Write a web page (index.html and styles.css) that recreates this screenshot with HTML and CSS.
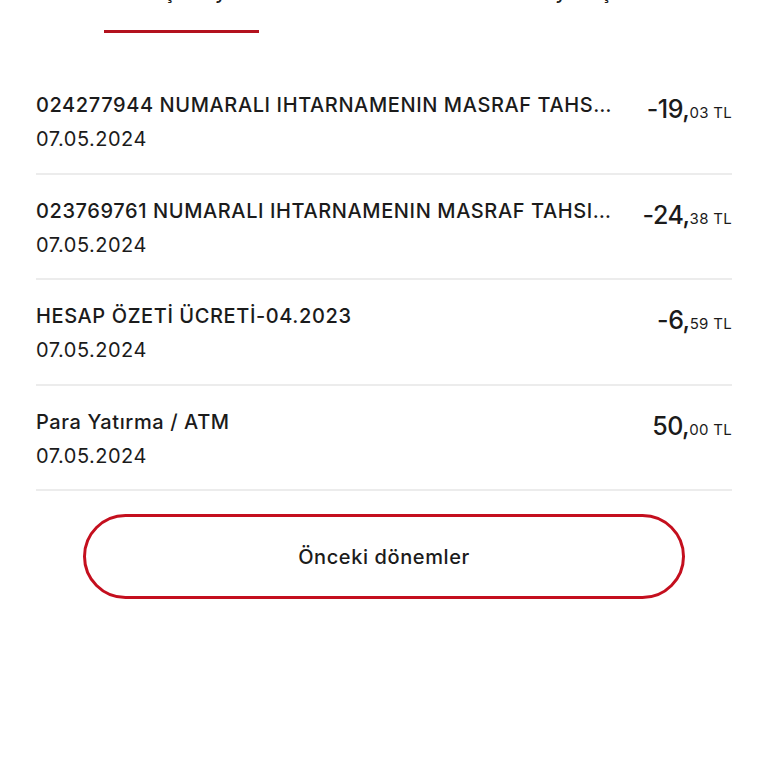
FILE: index.html
```html
<!DOCTYPE html>
<html lang="tr">
<head>
<meta charset="utf-8">
<link rel="stylesheet" href="styles.css">
</head>
<body>
<div class="page">
  <div class="tabs">
    <div class="tab tab-active">
      <span class="tab-label">Geçen ay</span>
      <span class="tab-bar"></span>
    </div>
    <div class="tab">
      <span class="tab-label">Bekleyen işlemler</span>
      <span class="tab-bar tab-bar-off"></span>
    </div>
  </div>

  <ul class="list">
    <li class="row">
      <div class="info">
        <div class="title">024277944 NUMARALI IHTARNAMENIN MASRAF TAHSILATI</div>
        <div class="date">07.05.2024</div>
      </div>
      <div class="amount"><span class="int">-19,</span><span class="dec">03 TL</span></div>
    </li>
    <li class="row">
      <div class="info">
        <div class="title">023769761 NUMARALI IHTARNAMENIN MASRAF TAHSILATI</div>
        <div class="date">07.05.2024</div>
      </div>
      <div class="amount"><span class="int">-24,</span><span class="dec">38 TL</span></div>
    </li>
    <li class="row">
      <div class="info">
        <div class="title">HESAP ÖZETİ ÜCRETİ-04.2023</div>
        <div class="date">07.05.2024</div>
      </div>
      <div class="amount"><span class="int">-6,</span><span class="dec">59 TL</span></div>
    </li>
    <li class="row">
      <div class="info">
        <div class="title">Para Yatırma / ATM</div>
        <div class="date">07.05.2024</div>
      </div>
      <div class="amount"><span class="int">50,</span><span class="dec">00 TL</span></div>
    </li>
  </ul>

  <div class="actions">
    <button class="btn-outline" type="button">Önceki dönemler</button>
  </div>
</div>
</body>
</html>
```

FILE: styles.css
```css
* { box-sizing: border-box; }

html, body {
  margin: 0;
  padding: 0;
  background: #ffffff;
}

body {
  font-family: "Inter", "Lato", "Noto Sans", sans-serif;
  color: #1b1b1b;
  overflow: hidden;
}

.page {
  padding: 0 36px;
}

.tabs {
  display: flex;
  justify-content: space-between;
  padding: 0 68px;
}

.tab {
  width: 155px;
  display: flex;
  flex-direction: column;
  align-items: center;
}

.tab-label {
  display: block;
  font-size: 20px;
  line-height: 24px;
  height: 24px;
  margin-top: -20px;
  font-weight: 500;
  white-space: nowrap;
}

.tab-bar {
  display: block;
  width: 155px;
  height: 3px;
  margin-top: 26px;
  background: #b3121e;
}

.tab-bar-off {
  background: transparent;
}

.list {
  list-style: none;
  margin: 36px 0 0;
  padding: 0;
}

.row {
  display: flex;
  justify-content: space-between;
  align-items: flex-start;
  padding: 24px 0 21.5px;
  border-bottom: 2px solid #ececec;
}

.info {
  flex: 1 1 auto;
  min-width: 0;
  display: flex;
  flex-direction: column;
  gap: 10px;
}

.title {
  font-size: 20px;
  line-height: 24px;
  font-weight: 500;
  white-space: nowrap;
  overflow: hidden;
  text-overflow: ellipsis;
  letter-spacing: 0.6px;
}

.date {
  font-size: 20px;
  line-height: 24px;
  font-weight: 400;
  letter-spacing: 0.5px;
}

.amount {
  flex: 0 0 auto;
  margin-left: 30px;
  margin-top: 2px;
  line-height: 28px;
  white-space: nowrap;
}

.int {
  font-size: 25px;
  font-weight: 500;
  letter-spacing: -0.5px;
}

.dec {
  font-size: 15px;
  font-weight: 400;
  letter-spacing: 0.3px;
}

.actions {
  display: flex;
  justify-content: center;
  margin-top: 23px;
}

.btn-outline {
  width: 602px;
  height: 85px;
  border: 3px solid #c40f1e;
  border-radius: 43px;
  background: #ffffff;
  font-family: "Inter", "Lato", "Noto Sans", sans-serif;
  font-size: 20px;
  font-weight: 500;
  letter-spacing: 0.6px;
  color: #1b1b1b;
}
```
